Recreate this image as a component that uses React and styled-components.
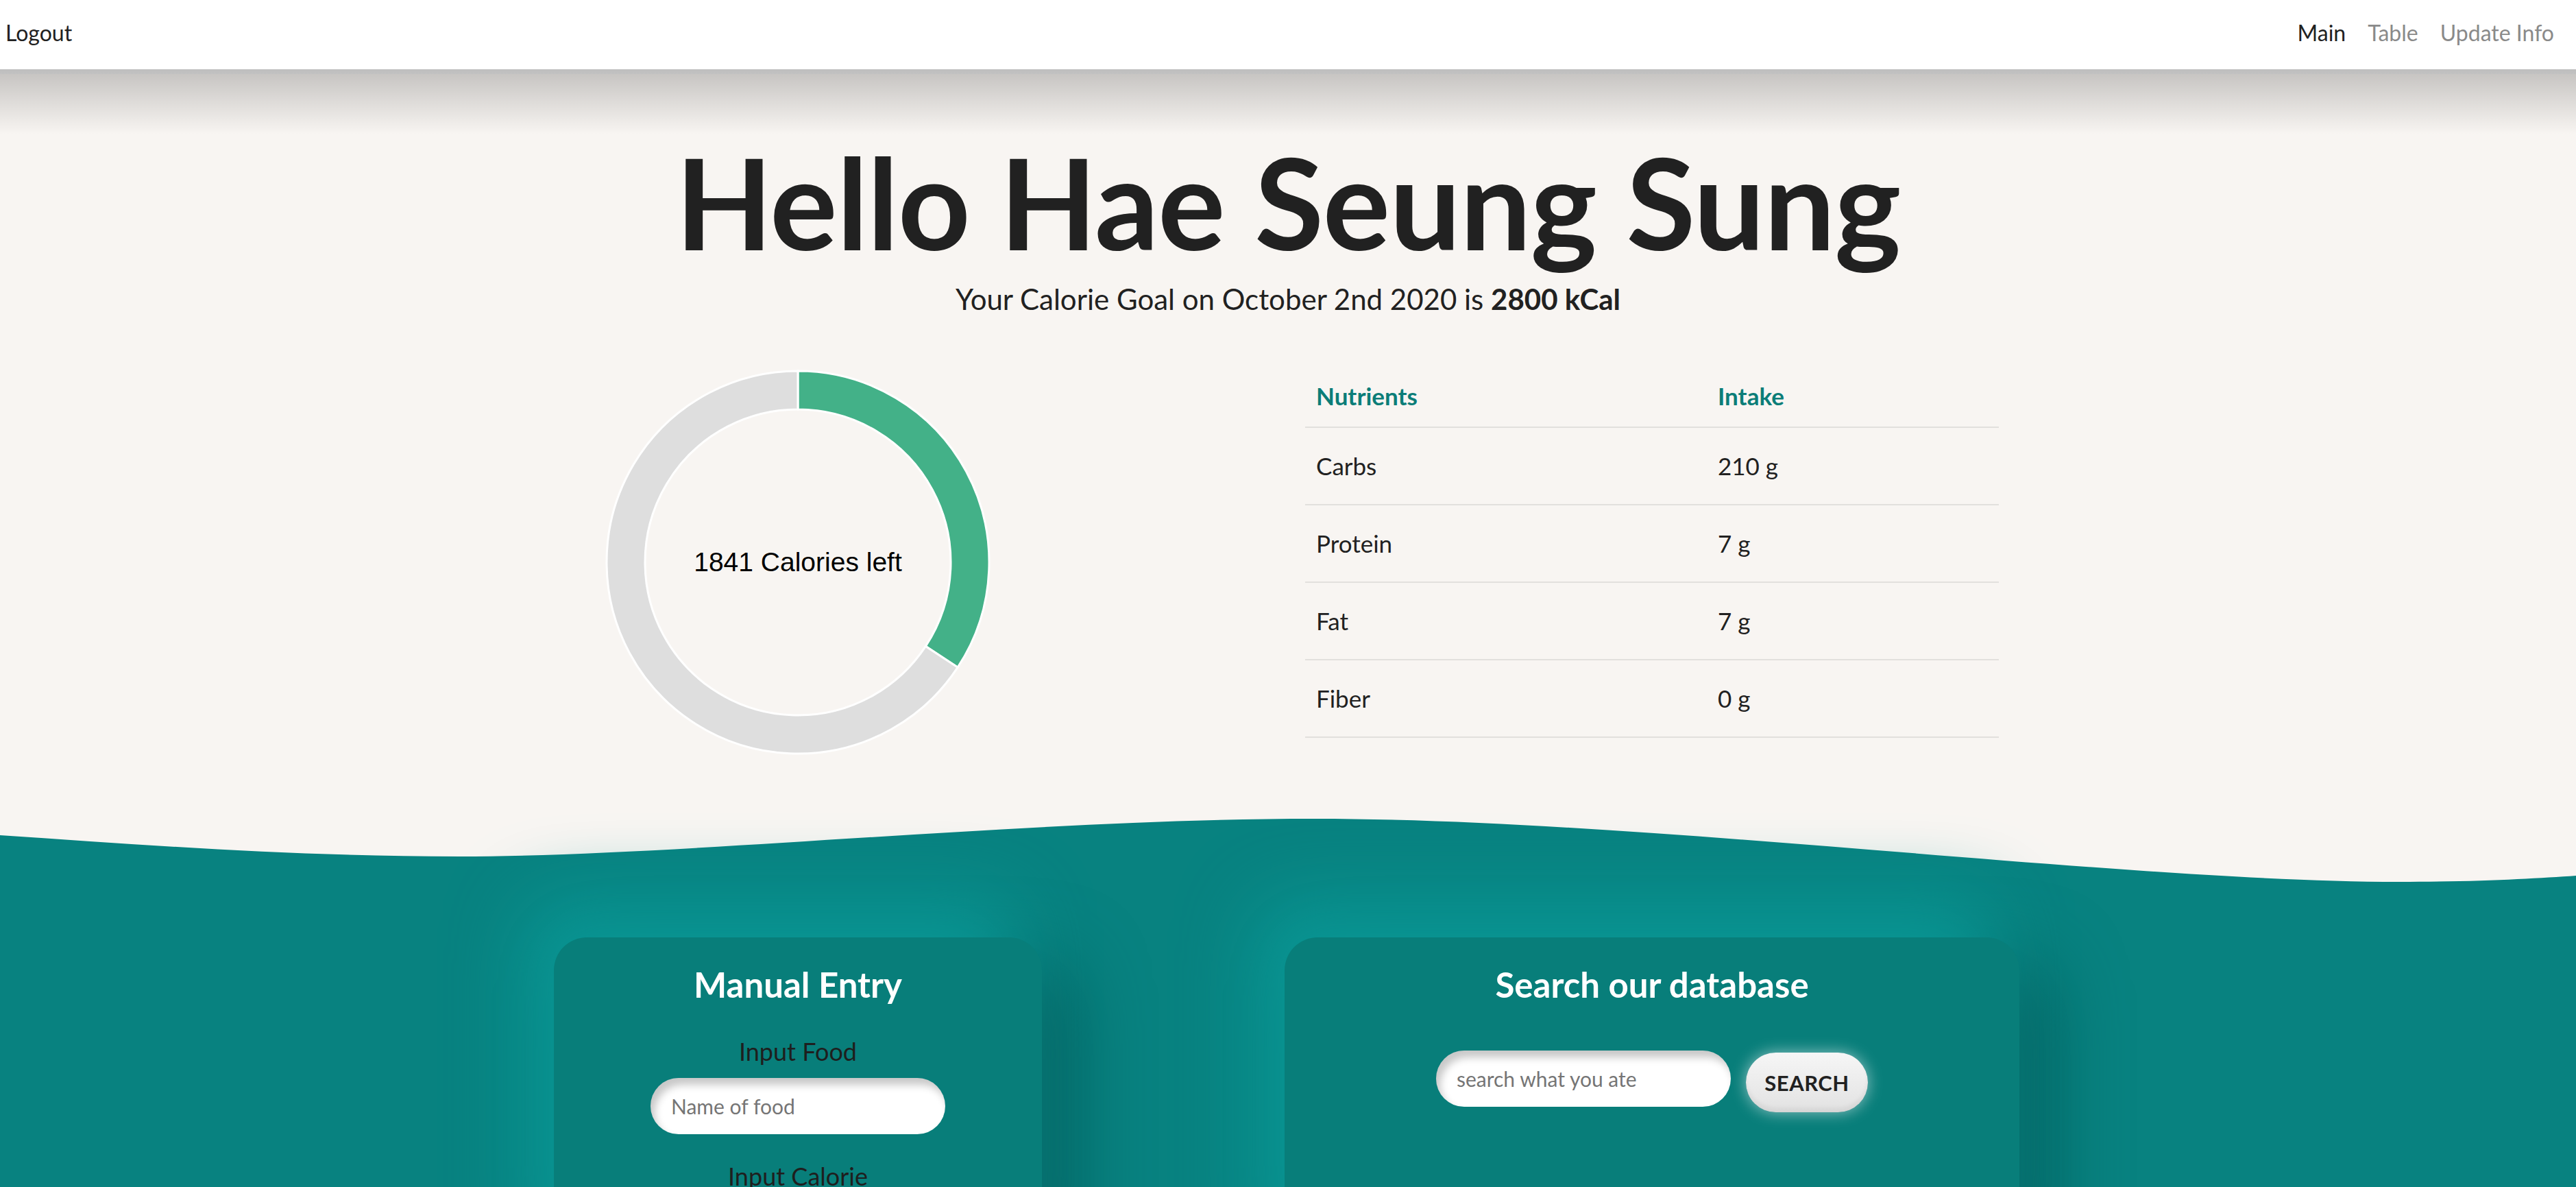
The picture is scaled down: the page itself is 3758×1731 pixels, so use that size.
import React from 'react';
import styled, { createGlobalStyle } from 'styled-components';

const GlobalStyle = createGlobalStyle`
  html, body {
    margin: 0;
    padding: 0;
    background: #f8f5f2;
    font-family: 'Source Sans Pro', Lato, 'Noto Sans', sans-serif;
    color: #212121;
  }
  * {
    box-sizing: border-box;
  }
`;

const Page = styled.div`
  height: 100vh;
  overflow: hidden;
  background: #f8f5f2;
`;

const NavBar = styled.nav`
  position: relative;
  z-index: 2;
  display: flex;
  align-items: center;
  justify-content: space-between;
  height: 108px;
  padding: 0 16px 7px 8px;
  background: #ffffff;
  border-bottom: 7px solid #f1f1f1;
  font-size: 32px;

  &::after {
    content: '';
    position: absolute;
    left: 0;
    right: 0;
    top: 100%;
    height: 95px;
    background: linear-gradient(rgba(0, 0, 0, 0.21), rgba(0, 0, 0, 0));
    pointer-events: none;
  }
`;

const NavLinks = styled.div`
  display: flex;
  align-items: center;
`;

const NavLink = styled.a`
  padding: 0 16px;
  color: ${(p) => (p.active ? '#212121' : '#8a8a8a')};
  text-decoration: none;
`;

const Logout = styled.a`
  color: #212121;
`;

const Hero = styled.header`
  display: flex;
  flex-direction: column;
  align-items: center;
  padding-top: 85px;
`;

const Title = styled.h1`
  margin: 0;
  font-size: 184px;
  font-weight: 700;
  line-height: 1.1;
  letter-spacing: -1px;
`;

const Subtitle = styled.p`
  margin: 12px 0 0;
  font-size: 42px;
  line-height: 1.4;

  b {
    font-weight: 700;
  }
`;

const Columns = styled.div`
  display: grid;
  grid-template-columns: 1246px 1246px;
  justify-content: center;
  align-items: start;
  padding-right: 184px;
`;

const Cell = styled.div`
  display: flex;
  justify-content: center;
`;

const Stats = styled(Columns)`
  margin-top: 73px;
`;

const ChartBox = styled.div`
  position: relative;
  width: 562px;
  height: 562px;
`;

const ChartLabel = styled.div`
  position: absolute;
  inset: 0;
  display: flex;
  align-items: center;
  justify-content: center;
  font-family: 'Liberation Sans', Arial, sans-serif;
  font-size: 39px;
  color: #000;
`;

const Table = styled.table`
  width: 1012px;
  border-collapse: collapse;
  font-size: 35px;

  th, td {
    text-align: left;
    padding: 32px 16px;
    line-height: 47px;
    border-bottom: 2px solid #e2e0dd;
  }

  th {
    padding: 15px 16px 21px;
    color: #0b7d78;
    font-weight: 700;
  }

  th:first-child, td:first-child {
    width: 586px;
  }
`;

const Waves = styled.section`
  margin-top: 82px;
`;

const WaveSvg = styled.svg`
  display: block;
  width: 100%;
  height: 110px;
`;

const Panel = styled.div`
  background: #088280;
  padding-top: 74px;
  height: 600px;
`;

const Card = styled.div`
  width: ${(p) => p.width}px;
  min-height: 520px;
  padding-top: 36px;
  border-radius: 48px;
  background: #087e7a;
  box-shadow: -40px -50px 110px #0a9896, 40px 40px 110px #055e5d;
  display: flex;
  flex-direction: column;
  align-items: center;
`;

const CardTitle = styled.h2`
  margin: 0 0 41px;
  color: #ffffff;
  font-size: 51px;
  font-weight: 700;
  line-height: 1.3;
`;

const Label = styled.label`
  display: block;
  font-size: 36px;
  line-height: 1.3;
  color: #1e1e1e;
  margin-bottom: 15px;
`;

const Field = styled.div`
  display: flex;
  flex-direction: column;
  align-items: center;
  margin-bottom: 38px;
`;

const Input = styled.input`
  width: 430px;
  height: 82px;
  border: none;
  border-radius: 41px;
  padding: 0 30px;
  background: #ffffff;
  box-shadow: inset 6px 10px 12px rgba(0, 0, 0, 0.22);
  font-family: inherit;
  font-size: 30px;
  color: #212121;
  outline: none;

  &::placeholder {
    color: #757575;
  }
`;

const SearchRow = styled.div`
  display: flex;
  align-items: flex-start;
  gap: 22px;
  margin-top: 22px;
`;

const SearchButton = styled.button`
  width: 178px;
  height: 87px;
  margin-top: 3px;
  border: none;
  border-radius: 44px;
  background: linear-gradient(#f6f6f6, #e2e2e2);
  box-shadow: 0 0 22px rgba(255, 255, 255, 0.55), inset 0 -6px 6px rgba(0, 0, 0, 0.06);
  font-family: inherit;
  font-size: 31px;
  font-weight: 700;
  letter-spacing: 0.5px;
  color: #212121;
`;

const calories = { goal: 2800, left: 1841 };
const nutrients = [
  { name: 'Carbs', value: '210 g' },
  { name: 'Protein', value: '7 g' },
  { name: 'Fat', value: '7 g' },
  { name: 'Fiber', value: '0 g' },
];

const point = (c, r, a) => {
  const t = a * Math.PI * 2;
  return `${(c + r * Math.sin(t)).toFixed(2)} ${(c - r * Math.cos(t)).toFixed(2)}`;
};

const sector = (c, ro, ri, a0, a1) => {
  const large = a1 - a0 > 0.5 ? 1 : 0;
  return [
    `M ${point(c, ro, a0)}`,
    `A ${ro} ${ro} 0 ${large} 1 ${point(c, ro, a1)}`,
    `L ${point(c, ri, a1)}`,
    `A ${ri} ${ri} 0 ${large} 0 ${point(c, ri, a0)}`,
    'Z',
  ].join(' ');
};

const Donut = ({ goal, left }) => {
  const eaten = (goal - left) / goal;
  return (
    <ChartBox>
      <svg width="562" height="562" viewBox="0 0 562 562">
        <path d={sector(281, 279, 223, 0, eaten)} fill="#43b188" stroke="#fff" strokeWidth="3" />
        <path d={sector(281, 279, 223, eaten, 1)} fill="#dedede" stroke="#fff" strokeWidth="3" />
      </svg>
      <ChartLabel>{left} Calories left</ChartLabel>
    </ChartBox>
  );
};

export default function App() {
  return (
    <Page>
      <GlobalStyle />
      <NavBar>
        <Logout>Logout</Logout>
        <NavLinks>
          <NavLink active>Main</NavLink>
          <NavLink>Table</NavLink>
          <NavLink>Update Info</NavLink>
        </NavLinks>
      </NavBar>

      <Hero>
        <Title>Hello Hae Seung Sung</Title>
        <Subtitle>
          Your Calorie Goal on October 2nd 2020 is <b>{calories.goal} kCal</b>
        </Subtitle>
      </Hero>

      <Stats>
        <Cell>
          <Donut goal={calories.goal} left={calories.left} />
        </Cell>
        <Cell>
          <Table>
            <thead>
              <tr>
                <th>Nutrients</th>
                <th>Intake</th>
              </tr>
            </thead>
            <tbody>
              {nutrients.map((n) => (
                <tr key={n.name}>
                  <td>{n.name}</td>
                  <td>{n.value}</td>
                </tr>
              ))}
            </tbody>
          </Table>
        </Cell>
      </Stats>

      <Waves>
        <WaveSvg viewBox="0 0 3758 110" preserveAspectRatio="none">
          <path
            d="M0 35 C 220 50 440 66 670 66 C 1000 66 1500 11 1918 11 C 2400 11 3100 103 3500 103 C 3620 103 3700 98 3758 94 L 3758 111 L 0 111 Z"
            fill="#088280"
          />
        </WaveSvg>
        <Panel>
          <Columns>
            <Cell>
              <Card width={712}>
                <CardTitle>Manual Entry</CardTitle>
                <Field>
                  <Label>Input Food</Label>
                  <Input placeholder="Name of food" />
                </Field>
                <Field>
                  <Label>Input Calorie</Label>
                  <Input placeholder="Calories" />
                </Field>
              </Card>
            </Cell>
            <Cell>
              <Card width={1072}>
                <CardTitle>Search our database</CardTitle>
                <SearchRow>
                  <Input placeholder="search what you ate" />
                  <SearchButton>SEARCH</SearchButton>
                </SearchRow>
              </Card>
            </Cell>
          </Columns>
        </Panel>
      </Waves>
    </Page>
  );
}
